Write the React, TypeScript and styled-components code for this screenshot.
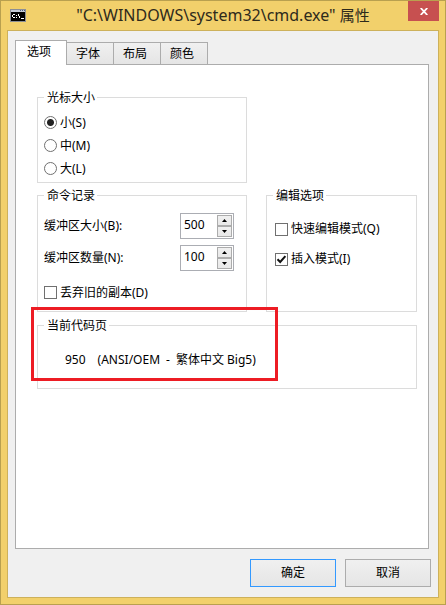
import React, { useState } from "react";
import styled, { createGlobalStyle } from "styled-components";

const GlobalStyle = createGlobalStyle`
  *, *::before, *::after { box-sizing: border-box; }
  body { margin: 0; }
  body, button, input {
    font-family: "Noto Sans", "Noto Sans CJK SC", sans-serif;
    font-size: 12px;
    line-height: 18px;
    color: #000;
  }
`;

const Window = styled.main`
  display: flex;
  flex-direction: column;
  min-height: 100vh;
  padding: 0 6px 6px;
  border: 1px solid #b9a04f;
  background: #f2d06b;
`;

const TitleBar = styled.header`
  display: grid;
  grid-template-columns: 1fr auto 1fr;
  height: 29px;
`;

const ConsoleIcon = styled.svg`
  margin: 8px 0 0 3px;
`;

const Title = styled.h1`
  margin: 0;
  font-size: 16px;
  font-weight: 400;
  line-height: 29px;
  white-space: nowrap;
  color: #2e2a1c;
`;

const TitleSuffix = styled.span`
  font-size: 15px;
`;

const CloseButton = styled.button`
  display: flex;
  justify-self: end;
  justify-content: center;
  width: 31px;
  height: 20px;
  padding: 7px 0 0;
  border: 0;
  background: #c75050;
`;

const Client = styled.div`
  display: flex;
  flex: 1;
  flex-direction: column;
  padding: 9px 7px 10px;
  border: 1px solid #cdb15b;
  background: #f0f0f0;
`;

const TabList = styled.div`
  display: flex;
  align-items: flex-end;
  height: 24px;
`;

const Tab = styled.button<{ $active: boolean }>`
  position: relative;
  z-index: ${(p) => (p.$active ? 1 : 0)};
  height: ${(p) => (p.$active ? 25 : 22)}px;
  margin-bottom: ${(p) => (p.$active ? -1 : 0)}px;
  padding: ${(p) => (p.$active ? "0 15px 2px 11px" : "0 13px 0 9px")};
  border: 1px solid #acacac;
  border-width: ${(p) => (p.$active ? "1px 1px 0" : "1px 1px 0 0")};
  background: ${(p) => (p.$active ? "#fff" : "linear-gradient(#f0f0f0, #e5e5e5)")};
`;

const Panel = styled.section`
  flex: 1;
  margin-right: 2px;
  padding: 23px 11px 23px 21px;
  border: 1px solid #acacac;
  background: #fff;
`;

const Groups = styled.div`
  display: grid;
  grid-template-columns: 210fr 151fr;
  gap: 3px 19px;
`;

const Group = styled.fieldset`
  min-width: 0;
  margin: 0;
  padding: 0 6px;
  border: 1px solid #dcdcdc;
`;

const CursorGroup = styled(Group)`
  height: 95px;
  padding-top: 4px;
`;

const HistoryGroup = styled(Group)`
  height: 126px;
  padding-top: 5px;
`;

const EditGroup = styled(Group)`
  padding-top: 9px;
`;

const EditOptions = styled.div`
  padding-left: 2px;
`;

const Legend = styled.legend`
  height: 19px;
  padding: 0 2px 0 3px;
  line-height: 19px;
`;

const Choice = styled.label<{ $height: number }>`
  display: flex;
  align-items: center;
  gap: 3px;
  height: ${(p) => p.$height}px;
  white-space: nowrap;
`;

const Radio = styled.input`
  appearance: none;
  flex: none;
  width: 13px;
  height: 13px;
  margin: 0;
  border: 1px solid #707070;
  border-radius: 50%;
  background: #fff;
  &:checked {
    background: radial-gradient(circle, #222 3px, #fff 4px);
  }
`;

const TickBox = styled.span`
  display: grid;
  flex: none;
  width: 13px;
  height: 13px;
  & > * {
    grid-area: 1 / 1;
  }
  svg {
    pointer-events: none;
    visibility: hidden;
  }
  input:checked + svg {
    visibility: visible;
  }
`;

const Checkbox = styled.input`
  appearance: none;
  width: 13px;
  height: 13px;
  margin: 0;
  border: 1px solid #707070;
  background: #fff;
`;

const NumberRow = styled.div`
  display: flex;
  align-items: center;
  justify-content: space-between;
  height: 32px;
  padding-right: 6px;
  white-space: nowrap;
`;

const Spinner = styled.div`
  display: flex;
  width: 54px;
  height: 26px;
  padding: 1px;
  border: 1px solid #abadb3;
  background: #fff;
`;

const NumberInput = styled.input`
  flex: 1;
  min-width: 0;
  padding: 0 0 2px 2px;
  border: 0;
  outline: 0;
  background: transparent;
`;

const SpinButtons = styled.div`
  display: flex;
  flex-direction: column;
  width: 15px;
`;

const SpinButton = styled.button`
  display: grid;
  flex: 1;
  place-items: center;
  min-height: 0;
  padding: 0;
  border: 1px solid #acacac;
  background: linear-gradient(#f0f0f0, #e8e8e8);
`;

const CodePageArea = styled.div`
  position: relative;
  margin-top: 4px;
`;

const CodePageGroup = styled(Group)`
  height: 73px;
  padding-top: 16px;
`;

const CodePageText = styled.p`
  display: flex;
  gap: 12px;
  margin: 0;
  padding-left: 21px;
  white-space: nowrap;
`;

const CodePageName = styled.span`
  display: flex;
  gap: 6px;
`;

const Highlight = styled.div`
  position: absolute;
  top: -9px;
  left: -6px;
  width: 247px;
  height: 74px;
  border: 3px solid #ed1c24;
  pointer-events: none;
`;

const Actions = styled.footer`
  display: flex;
  justify-content: flex-end;
  gap: 9px;
  padding-top: 10px;
`;

const ActionButton = styled.button<{ $primary?: boolean }>`
  width: 86px;
  height: 28px;
  padding: 0;
  border: 1px solid ${(p) => (p.$primary ? "#3399ff" : "#acacac")};
  background: linear-gradient(#f0f0f0, #e5e5e5);
`;

function Check({ label, checked, height }: { label: string; checked?: boolean; height: number }) {
  return (
    <Choice $height={height}>
      <TickBox>
        <Checkbox type="checkbox" defaultChecked={checked} />
        <svg width="13" height="13" viewBox="0 0 13 13" aria-hidden="true">
          <path d="M2.5 6.2 L5.2 9 L10.4 3.2" fill="none" stroke="#111" strokeWidth="2" />
        </svg>
      </TickBox>
      {label}
    </Choice>
  );
}

function NumberField({ id, label, initial }: { id: string; label: string; initial: number }) {
  const [value, setValue] = useState(initial);
  return (
    <NumberRow>
      <label htmlFor={id}>{label}</label>
      <Spinner>
        <NumberInput
          id={id}
          inputMode="numeric"
          value={value}
          onChange={(e) => setValue(Number(e.target.value) || 0)}
        />
        <SpinButtons>
          <SpinButton type="button" aria-label="增加" onClick={() => setValue(value + 1)}>
            <svg width="5" height="3" viewBox="0 0 5 3">
              <path d="M0 3 L2.5 0 L5 3 Z" />
            </svg>
          </SpinButton>
          <SpinButton type="button" aria-label="减少" onClick={() => setValue(Math.max(1, value - 1))}>
            <svg width="5" height="3" viewBox="0 0 5 3">
              <path d="M0 0 L2.5 3 L5 0 Z" />
            </svg>
          </SpinButton>
        </SpinButtons>
      </Spinner>
    </NumberRow>
  );
}

const tabs = ["选项", "字体", "布局", "颜色"];
const sizes = ["小(S)", "中(M)", "大(L)"];

export default function App() {
  const [active, setActive] = useState(0);
  return (
    <>
      <GlobalStyle />
      <Window>
        <TitleBar>
          <ConsoleIcon width="16" height="13" viewBox="0 0 16 13" shapeRendering="crispEdges" aria-hidden="true">
            <rect width="16" height="13" fill="#8c8f96" />
            <rect x="1" y="1" width="14" height="2" fill="#c3cad6" />
            <path d="M10 1h1v1h-1zM12 1h1v1h-1zM14 1h1v1h-1z" fill="#4d5f86" />
            <rect x="1" y="3" width="14" height="9" fill="#000" />
            <path
              d="M3 5h2v1h-2zM2 6h1v2h-1zM3 8h2v1h-2zM6 6h1v1h-1zM6 8h1v1h-1zM8 5h1v2h-1zM9 7h1v2h-1zM11 9h3v1h-3z"
              fill="#fff"
            />
          </ConsoleIcon>
          <Title>
            "C:\WINDOWS\system32\cmd.exe" <TitleSuffix>属性</TitleSuffix>
          </Title>
          <CloseButton type="button" aria-label="关闭">
            <svg width="8" height="7" viewBox="0 0 8 7">
              <path d="M0.7 0 L7.3 7 M7.3 0 L0.7 7" stroke="#fff" strokeWidth="1.8" />
            </svg>
          </CloseButton>
        </TitleBar>
        <Client>
          <TabList role="tablist">
            {tabs.map((name, i) => (
              <Tab
                key={name}
                type="button"
                role="tab"
                aria-selected={i === active}
                $active={i === active}
                onClick={() => setActive(i)}
              >
                {name}
              </Tab>
            ))}
          </TabList>
          <Panel role="tabpanel">
            <Groups>
              <CursorGroup>
                <Legend>光标大小</Legend>
                {sizes.map((size, i) => (
                  <Choice key={size} $height={23}>
                    <Radio type="radio" name="cursor-size" defaultChecked={i === 0} />
                    {size}
                  </Choice>
                ))}
              </CursorGroup>
              <span />
              <HistoryGroup>
                <Legend>命令记录</Legend>
                <NumberField id="buffer-size" label="缓冲区大小(B):" initial={500} />
                <NumberField id="buffer-count" label="缓冲区数量(N):" initial={100} />
                <Check label="丢弃旧的副本(D)" height={37} />
              </HistoryGroup>
              <EditGroup>
                <Legend>编辑选项</Legend>
                <EditOptions>
                  <Check label="快速编辑模式(Q)" height={30} />
                  <Check label="插入模式(I)" height={30} checked />
                </EditOptions>
              </EditGroup>
            </Groups>
            <CodePageArea>
              <CodePageGroup>
                <Legend>当前代码页</Legend>
                <CodePageText>
                  <span>950</span>
                  <CodePageName>
                    <span>(ANSI/OEM</span>
                    <span>-</span>
                    <span>繁体中文 Big5)</span>
                  </CodePageName>
                </CodePageText>
              </CodePageGroup>
              <Highlight />
            </CodePageArea>
          </Panel>
          <Actions>
            <ActionButton type="button" $primary>
              确定
            </ActionButton>
            <ActionButton type="button">取消</ActionButton>
          </Actions>
        </Client>
      </Window>
    </>
  );
}
